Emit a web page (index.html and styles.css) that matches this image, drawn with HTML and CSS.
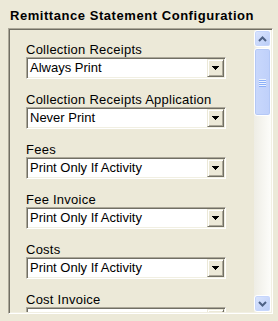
FILE: index.html
```html
<!DOCTYPE html>
<html>
<head>
<meta charset="utf-8">
<link rel="stylesheet" href="styles.css">
</head>
<body>
<div class="title">Remittance Statement Configuration</div>
<div class="panel">
  <div class="content">
    <div class="group">
      <div class="label">Collection Receipts</div>
      <div class="select"><span class="value">Always Print</span><span class="btn"><svg width="7" height="4" viewBox="0 0 7 4"><rect x="0" y="0" width="7" height="1"/><rect x="1" y="1" width="5" height="1"/><rect x="2" y="2" width="3" height="1"/><rect x="3" y="3" width="1" height="1"/></svg></span></div>
    </div>
    <div class="group">
      <div class="label">Collection Receipts Application</div>
      <div class="select"><span class="value">Never Print</span><span class="btn"><svg width="7" height="4" viewBox="0 0 7 4"><rect x="0" y="0" width="7" height="1"/><rect x="1" y="1" width="5" height="1"/><rect x="2" y="2" width="3" height="1"/><rect x="3" y="3" width="1" height="1"/></svg></span></div>
    </div>
    <div class="group">
      <div class="label">Fees</div>
      <div class="select"><span class="value">Print Only If Activity</span><span class="btn"><svg width="7" height="4" viewBox="0 0 7 4"><rect x="0" y="0" width="7" height="1"/><rect x="1" y="1" width="5" height="1"/><rect x="2" y="2" width="3" height="1"/><rect x="3" y="3" width="1" height="1"/></svg></span></div>
    </div>
    <div class="group">
      <div class="label">Fee Invoice</div>
      <div class="select"><span class="value">Print Only If Activity</span><span class="btn"><svg width="7" height="4" viewBox="0 0 7 4"><rect x="0" y="0" width="7" height="1"/><rect x="1" y="1" width="5" height="1"/><rect x="2" y="2" width="3" height="1"/><rect x="3" y="3" width="1" height="1"/></svg></span></div>
    </div>
    <div class="group">
      <div class="label">Costs</div>
      <div class="select"><span class="value">Print Only If Activity</span><span class="btn"><svg width="7" height="4" viewBox="0 0 7 4"><rect x="0" y="0" width="7" height="1"/><rect x="1" y="1" width="5" height="1"/><rect x="2" y="2" width="3" height="1"/><rect x="3" y="3" width="1" height="1"/></svg></span></div>
    </div>
    <div class="group">
      <div class="label">Cost Invoice</div>
      <div class="select"><span class="value">Print Only If Activity</span><span class="btn"><svg width="7" height="4" viewBox="0 0 7 4"><rect x="0" y="0" width="7" height="1"/><rect x="1" y="1" width="5" height="1"/><rect x="2" y="2" width="3" height="1"/><rect x="3" y="3" width="1" height="1"/></svg></span></div>
    </div>
  </div>
  <div class="scrollbar">
    <div class="sbtn"><svg width="9" height="6" viewBox="0 0 9 6"><polyline points="1,5 4.5,1.5 8,5" fill="none" stroke="#4D6185" stroke-width="2"/></svg></div>
    <div class="track">
      <div class="thumb"><div class="grip"><i></i><i></i><i></i><i></i></div></div>
    </div>
    <div class="sbtn"><svg width="9" height="6" viewBox="0 0 9 6"><polyline points="1,1 4.5,4.5 8,1" fill="none" stroke="#4D6185" stroke-width="2"/></svg></div>
  </div>
</div>
</body>
</html>
```
FILE: styles.css
```css
html, body {
  margin: 0;
  padding: 0;
  background: #ECE9D8;
  font-family: "Liberation Sans", Arial, sans-serif;
  color: #000;
}
.title {
  padding: 8px 0 0 10px;
  font-weight: bold;
  font-size: 13px;
  letter-spacing: 0.55px;
  line-height: 16px;
  height: 20px;
}
.panel {
  margin-left: 8px;
  width: 265px;
  height: 286px;
  box-sizing: border-box;
  border: 1px solid;
  border-color: #ACA899 #FFFFFF #FFFFFF #ACA899;
  box-shadow: inset 1px 1px #716F64, inset -1px -1px #F1EFE2;
  padding: 1px;
  display: flex;
}
.content {
  flex: 1;
  overflow: hidden;
  padding: 12px 0 0 16px;
}
.group {
  margin-bottom: 13px;
}
.label {
  font-size: 13px;
  letter-spacing: 0.25px;
  line-height: 15px;
  height: 15px;
}
.select {
  width: 200px;
  height: 22px;
  box-sizing: border-box;
  border: 1px solid;
  border-color: #ACA899 #FFFFFF #FFFFFF #ACA899;
  box-shadow: inset 1px 1px #716F64, inset -1px -1px #F1EFE2;
  padding: 1px;
  display: flex;
  background: #fff;
  background-clip: content-box;
}
.value {
  flex: 1;
  font-size: 13px;
  line-height: 18px;
  padding-left: 2px;
  white-space: nowrap;
  overflow: hidden;
}
.btn {
  width: 17px;
  height: 18px;
  box-sizing: border-box;
  background: #ECE9D8;
  border: 1px solid;
  border-color: #ECE9D8 #716F64 #716F64 #ECE9D8;
  box-shadow: inset 1px 1px #FFFFFF, inset -1px -1px #ACA899;
  display: flex;
  align-items: center;
  justify-content: center;
}
.btn svg {
  display: block;
  fill: #000;
  shape-rendering: crispEdges;
}
.scrollbar {
  width: 17px;
  display: flex;
  flex-direction: column;
  background: linear-gradient(to right, #EEEDE5, #FDFDFA);
}
.sbtn {
  height: 17px;
  box-sizing: border-box;
  border: 1px solid #FFFFFF;
  border-radius: 3px;
  background: linear-gradient(135deg, #DCE6FE, #B9CCF7);
  box-shadow: inset 0 0 0 1px #C6D6FC;
  display: flex;
  align-items: center;
  justify-content: center;
}
.sbtn svg {
  display: block;
}
.track {
  flex: 1;
}
.thumb {
  margin-top: 1px;
  height: 68px;
  box-sizing: border-box;
  border: 1px solid #FFFFFF;
  border-radius: 3px;
  background: linear-gradient(to right, #C9D8FC, #BFD0FA);
  box-shadow: inset 0 0 0 1px #B4C8F6;
  display: flex;
  align-items: center;
  justify-content: center;
}
.grip {
  width: 7px;
  display: flex;
  flex-direction: column;
  gap: 1px;
}
.grip i {
  display: block;
  height: 1px;
  background: #EEF4FE;
  box-shadow: 0 1px #8CB0F8;
}
```
